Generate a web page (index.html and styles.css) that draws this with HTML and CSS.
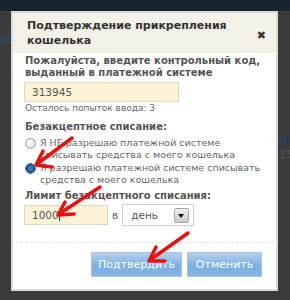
FILE: index.html
```html
<!DOCTYPE html>
<html lang="ru">
<head>
  <meta charset="UTF-8">
  <title>Подтверждение прикрепления кошелька</title>
  <link rel="stylesheet" href="styles.css">
</head>
<body>

  <div class="topbar"></div>
  <div class="backdrop-left"><span class="under">ый</span></div>
  <div class="backdrop-right"><span class="blue">Н</span><br><span class="grey">33</span></div>

  <div class="dialog">
    <div class="dialog-head">
      <h2>Подтверждение прикрепления кошелька</h2>
      <span class="close">&#x2716;</span>
    </div>

    <div class="dialog-body">
      <p class="label">Пожалуйста, введите контрольный код, выданный в платежной системе</p>
      <input type="text" class="field code" value="313945">
      <p class="hint">Осталось попыток ввода: 3</p>

      <p class="label title">Безакцептное списание:</p>
      <label class="radio first">
        <span class="dot"></span>
        <span>Я НЕ разрешаю платежной системе списывать средства с моего кошелька</span>
      </label>
      <label class="radio">
        <span class="dot on"></span>
        <span>Я разрешаю платежной системе списывать средства с моего кошелька</span>
      </label>

      <p class="label title2">Лимит безакцептного списания:</p>
      <div class="limit">
        <span class="field amount">1000<i class="caret"></i></span>
        <span class="in">в</span>
        <span class="select">день<span class="drop"></span></span>
      </div>

      <div class="actions">
        <button class="btn ok">Подтвердить</button>
        <button class="btn cancel">Отменить</button>
      </div>
    </div>
  </div>

  <!-- красные стрелки поверх скриншота -->
  <svg class="arrows" width="290" height="300" viewBox="0 0 290 300">
    <g stroke="#e8100f" stroke-width="3.5" fill="none" stroke-linecap="round" stroke-linejoin="round">
      <path d="M72 138 L37 164"/>
      <path d="M43 151 L36 165 L52 167"/>
      <path d="M100 187 L59 214"/>
      <path d="M65 202 L58 215 L74 214"/>
      <path d="M188 233 L150 260"/>
      <path d="M156 247 L149 261 L165 261"/>
    </g>
  </svg>

</body>
</html>
```

FILE: styles.css
```css
body {
  margin: 0;
  width: 290px;
  height: 300px;
  background: #3b3b3b;
  font-family: "DejaVu Sans", Verdana, sans-serif;
  color: #555;
  position: relative;
  overflow: hidden;
}

.topbar {
  height: 11px;
  background: #17232e;
}

.backdrop-left {
  position: absolute;
  left: 0;
  top: 30px;
  width: 11px;
  overflow: hidden;
  font-size: 12px;
  color: #2e4a66;
}

.backdrop-left .under {
  text-decoration: underline;
  margin-left: -4px;
}

.backdrop-right {
  position: absolute;
  left: 279px;
  top: 135px;
  font-size: 12px;
  font-weight: bold;
  line-height: 13px;
}

.backdrop-right .blue { color: #1e3e63; }
.backdrop-right .grey { color: #555; font-weight: normal; font-size: 10px; }

.dialog {
  margin-left: 11px;
  width: 263px;
  height: 276px;
  background: #fff;
  border: 2px solid #d9d9d9;
}

.dialog-head {
  display: flex;
  align-items: center;
  justify-content: space-between;
  height: 40px;
  padding: 0 10px 0 14px;
  background: #f3f1e7;
}

.dialog-head h2 {
  margin: 0;
  font-size: 11px;
  line-height: 15px;
  color: #333;
}

.close {
  font-size: 11px;
  color: #333;
  margin-top: 4px;
}

.dialog-body {
  padding: 2px 12px 0 12px;
}

.label {
  margin: 0;
  font-size: 10px;
  font-weight: bold;
  line-height: 12px;
  color: #555;
}

.field {
  display: block;
  box-sizing: border-box;
  height: 20px;
  padding: 0 7px;
  background: #fcf3d4;
  border: 1px solid #ddd7c2;
  font-family: inherit;
  font-size: 10.5px;
  color: #555;
}

.code {
  width: 155px;
  margin: 3px 0 0 -1px;
}

.hint {
  margin: 1px 0 0;
  font-size: 9px;
  line-height: 11px;
  color: #666;
}

.title {
  margin-top: 7px;
}

.title2 {
  margin-top: 4px;
}

.radio {
  display: flex;
  gap: 4px;
  margin-top: 1px;
  font-size: 9.5px;
  line-height: 12px;
  color: #666;
}

.radio.first {
  margin-top: 4px;
}

.dot {
  flex: none;
  box-sizing: border-box;
  width: 11px;
  height: 11px;
  margin-top: 1px;
  border: 1px solid #9a9a9a;
  border-radius: 50%;
  background: radial-gradient(circle at 40% 35%, #fff, #d9d9d9);
}

.dot.on {
  border-color: #3a5d7e;
  background: radial-gradient(circle, #2b7cc6 0 2.5px, #0c3558 3.5px 4px, #dfe9f2 4.5px);
}

.limit {
  display: flex;
  align-items: center;
  margin-top: 2px;
}

.amount {
  width: 84px;
  line-height: 18px;
  margin-left: -1px;
}

.caret {
  display: inline-block;
  width: 1px;
  height: 12px;
  background: #333;
  vertical-align: -2px;
}

.in {
  margin: 0 4px 0 4px;
  font-size: 10.5px;
  color: #666;
}

.select {
  position: relative;
  box-sizing: border-box;
  width: 72px;
  height: 22px;
  padding-left: 8px;
  border: 1px solid #cfcfcf;
  font-size: 10.5px;
  line-height: 20px;
  color: #555;
}

.drop {
  position: absolute;
  right: 4px;
  top: 3px;
  width: 13px;
  height: 13px;
  background: linear-gradient(#f1f1f1, #c9c9c9);
  border: 1px solid #a8a8a8;
  border-radius: 2px;
}

.drop::after {
  content: "";
  position: absolute;
  left: 3px;
  top: 5px;
  border: 3.5px solid transparent;
  border-top: 4px solid #111;
  border-bottom: 0;
}

.actions {
  display: flex;
  justify-content: flex-end;
  gap: 5px;
  margin: 16px -10px 0 -10px;
  padding: 9px 12px 0 0;
  border-top: 1px dashed #e4e4e4;
}

.btn {
  height: 25px;
  padding: 0;
  background: linear-gradient(#b4d0ee, #7aaee2 60%, #86b6e4);
  border: 1px solid #a9c5e4;
  color: #fff;
  font-family: inherit;
  font-size: 11px;
}

.btn.ok { width: 91px; }
.btn.cancel { width: 75px; }

.arrows {
  position: absolute;
  left: 0;
  top: 0;
}
```
